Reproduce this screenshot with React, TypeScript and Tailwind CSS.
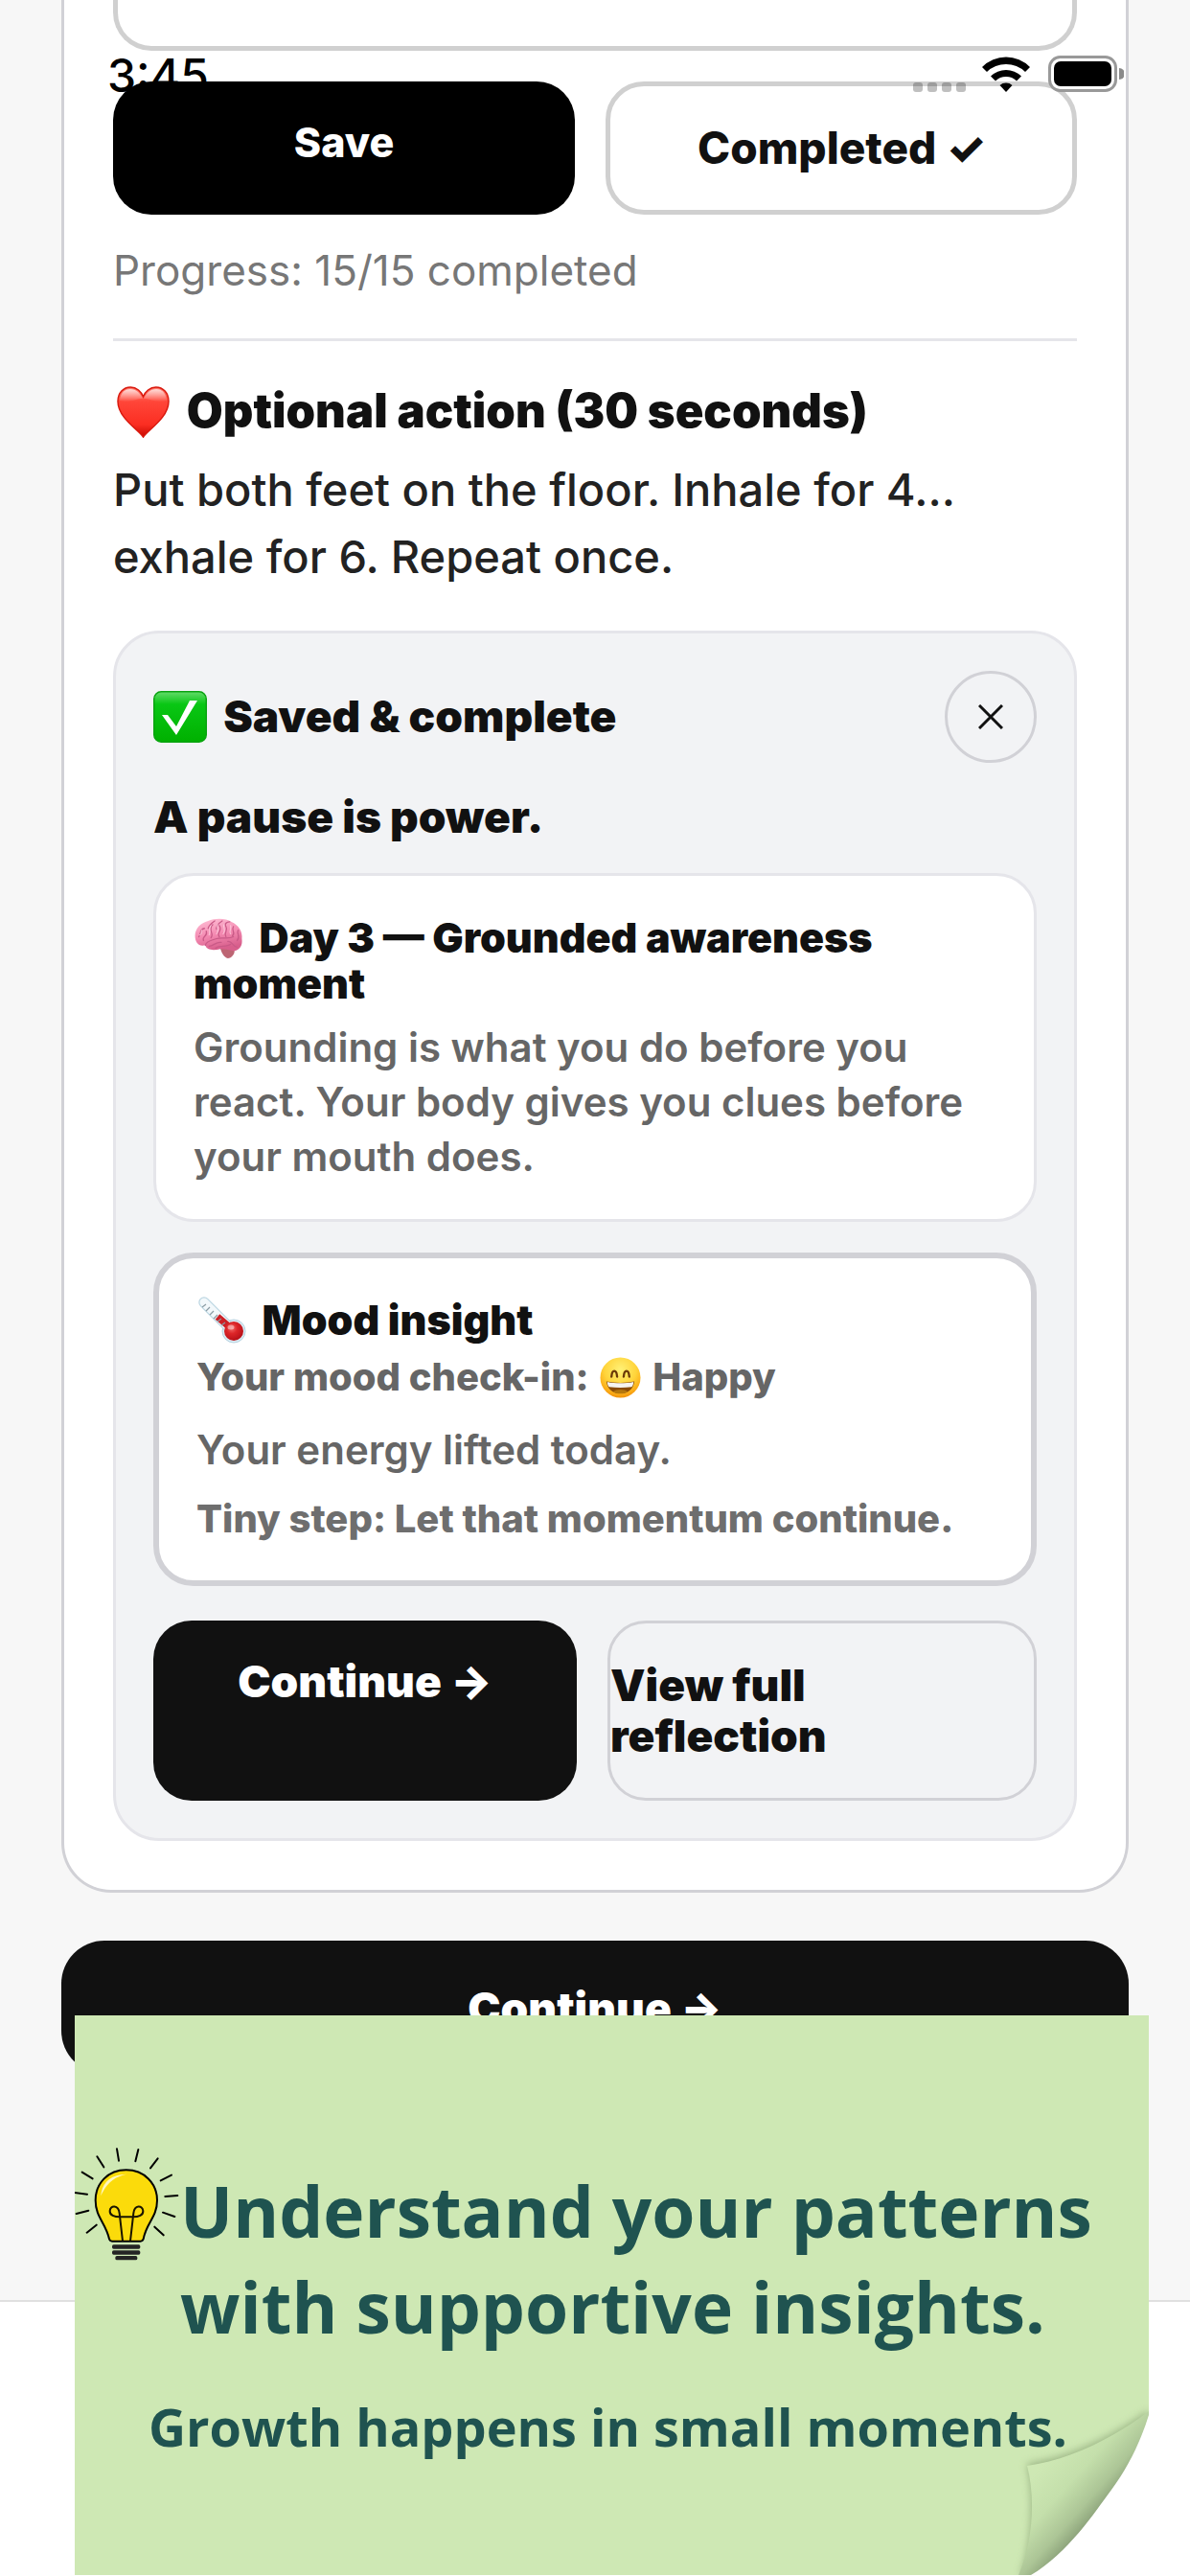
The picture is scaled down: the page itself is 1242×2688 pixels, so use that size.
import type { ReactNode } from "react";

// ---------- status bar ----------

const WifiIcon = () => (
  <svg viewBox="0 0 50 38" className="h-[38px] w-[50px]" aria-hidden="true">
    <path d="M0 12A35 35 0 0 1 50 12L45 17A29 29 0 0 0 5 17Z" />
    <path d="M9 21.5A23 23 0 0 1 41 21.5L36 26.5A16 16 0 0 0 14 26.5Z" />
    <path d="M18.5 31A10 10 0 0 1 31.5 31L25 38Z" />
  </svg>
);

const BatteryIcon = () => (
  <svg viewBox="0 0 79 38" className="h-[38px] w-[79px]" aria-hidden="true">
    <rect x="1.5" y="1.5" width="69" height="35" rx="11" fill="#fff" stroke="#999" strokeWidth="3" />
    <rect x="6" y="6" width="60" height="26" rx="7" />
    <path d="M74 13a6 6 0 0 1 0 12Z" fill="#8a8a8a" />
  </svg>
);

const StatusBar = () => (
  <div className="pointer-events-none absolute inset-x-0 top-0 z-10 flex items-start justify-between pt-[58px] pr-[69px] pl-[112px]">
    <span className="text-[48px] leading-[42px] font-medium text-black">3:45</span>
    <div className="flex items-start">
      <div className="flex gap-[5px] pt-7 pr-[17px]">
        {[0, 1, 2, 3].map((dot) => (
          <span key={dot} className="size-[10px] rounded-[3px] bg-black/25" />
        ))}
      </div>
      <div className="flex gap-[19px]">
        <WifiIcon />
        <BatteryIcon />
      </div>
    </div>
  </div>
);

// ---------- emoji ----------

const HeartEmoji = () => (
  <svg viewBox="0 0 56 55" className="mr-2 ml-1 inline h-[54px] w-[55px] align-[-11px]" aria-hidden="true">
    <defs>
      <linearGradient id="heart" x1="0" y1="0" x2="0" y2="1">
        <stop offset="0" stopColor="#ff7d70" />
        <stop offset="0.3" stopColor="#ff4538" />
        <stop offset="0.75" stopColor="#fb2e22" />
        <stop offset="1" stopColor="#c60800" />
      </linearGradient>
      <linearGradient id="heartShine" x1="0" y1="0" x2="0" y2="1">
        <stop offset="0" stopColor="#fff" stopOpacity="0.75" />
        <stop offset="1" stopColor="#fff" stopOpacity="0" />
      </linearGradient>
    </defs>
    <path
      d="M28 54C24 47 1 34 1 16C1 7 7 1 14.500 1C21 1 26 6 28 11C30 6 35 1 41.500 1C49 1 55 7 55 16C55 34 32 47 28 54Z"
      fill="url(#heart)"
      stroke="#d9180d"
      strokeWidth="1.500"
    />
    <path d="M3 15C4 6 9 3 14 3C21 3 25 8 27.500 13C20 13 13 19 3 15Z" fill="url(#heartShine)" />
    <path d="M53 15C52 6 47 3 42 3C35 3 31 8 28.500 13C36 13 43 19 53 15Z" fill="url(#heartShine)" />
  </svg>
);

const CheckEmoji = () => (
  <svg viewBox="0 0 56 54" className="mr-2 inline h-[54px] w-14 align-[-11px]" aria-hidden="true">
    <defs>
      <linearGradient id="check" x1="0" y1="0" x2="0" y2="1">
        <stop offset="0" stopColor="#63db69" />
        <stop offset="0.25" stopColor="#09c714" />
        <stop offset="1" stopColor="#00b000" />
      </linearGradient>
    </defs>
    <rect x="0.750" y="0.750" width="54.500" height="52.500" rx="7.500" fill="url(#check)" stroke="#0aa310" strokeWidth="1.500" />
    <path d="M9 25h6l9 12L38 10h8L24 46Z" fill="#fff" />
  </svg>
);

const BrainEmoji = () => (
  <svg viewBox="0 0 52 44" className="mr-2 inline h-[43px] w-[52px] align-[-7px]" aria-hidden="true">
    <defs>
      <linearGradient id="brain" x1="0" y1="0" x2="0.300" y2="1">
        <stop offset="0" stopColor="#ffc3d8" />
        <stop offset="0.550" stopColor="#f48bb2" />
        <stop offset="1" stopColor="#d85f8c" />
      </linearGradient>
    </defs>
    <path d="M28 32C31 33 40 30 43 34C44 38 40 43 36 43C32 42 29 37 28 32Z" fill="#bd6573" />
    <path
      d="M12 29C5 31 1 26 1 19C1 11 7 5 15 3C22 0 34 0 40 4C47 7 52 14 51 22C52 29 49 34 43 35C37 34 32 33 28 33C20 35 13 34 12 29Z"
      fill="url(#brain)"
    />
    <g fill="none" stroke="#c95a87" strokeWidth="1.300" strokeLinecap="round">
      <path d="M12 29C13 24 19 24 24 22C29 20 36 23 42 20" />
      <path d="M5 20C8 17 5 12 11 11M10 24C8 19 15 20 13 14M18 21C22 17 14 12 20 7M15 11C16 7 19 5 22 3" />
      <path d="M27 20C23 15 31 14 27 8M24 12C23 8 27 5 30 3M34 20C31 15 37 14 34 9C32 6 35 4 38 4" />
      <path d="M41 19C45 15 39 14 42 9M46 24C50 19 45 17 47 13M16 30C21 30 23 25 29 26M23 32C28 28 34 32 39 28M36 25C41 24 41 31 46 31" />
    </g>
    <g fill="none" stroke="#ffe0ea" strokeOpacity="0.800" strokeLinecap="round">
      <path d="M8 13C7 16 9 17 6 18M18 8C15 12 18 14 16 18M25 7C24 11 27 13 24 17M32 7C31 11 34 13 31 17M39 8C40 12 37 14 39 17" />
    </g>
  </svg>
);

const ThermometerEmoji = () => (
  <svg viewBox="0 0 50 50" className="mr-2 ml-0.5 inline h-[50px] w-[50px] align-[-9px]" aria-hidden="true">
    <defs>
      <radialGradient id="bulbRed" cx="0.400" cy="0.350" r="0.700">
        <stop offset="0" stopColor="#f26a68" />
        <stop offset="0.400" stopColor="#dd2629" />
        <stop offset="1" stopColor="#b30d16" />
      </radialGradient>
    </defs>
    <circle cx="37" cy="37" r="12" fill="#dcebf3" stroke="#b5d2e0" />
    <path d="M6 7L32 33" stroke="#bcd6e2" strokeWidth="11.500" strokeLinecap="round" />
    <path d="M6 7L32 33" stroke="#f2f8fb" strokeWidth="9" strokeLinecap="round" />
    <path d="M20 22L34 34" stroke="#cc1f25" strokeWidth="7" />
    <circle cx="37" cy="37" r="10" fill="url(#bulbRed)" />
    <path d="M4 12l4-3M8 16l4-4M12 20l4-4M16 24l4-4M20 27l4-3M24 31l4-3" stroke="#8b9ba3" strokeWidth="1.200" />
    <ellipse cx="34" cy="33" rx="3.500" ry="2.500" fill="#fff" opacity="0.450" />
  </svg>
);

const GrinEmoji = () => (
  <svg viewBox="0 0 44 44" className="mx-[3px] inline size-[43px] align-[-8px]" aria-hidden="true">
    <defs>
      <radialGradient id="grin" cx="0.500" cy="0.300" r="0.720">
        <stop offset="0" stopColor="#fff176" />
        <stop offset="0.550" stopColor="#ffd43a" />
        <stop offset="0.850" stopColor="#fbab17" />
        <stop offset="1" stopColor="#ee8a06" />
      </radialGradient>
    </defs>
    <circle cx="22" cy="22" r="21.500" fill="url(#grin)" />
    <path d="M12.500 21C13 13 18 13 18.500 21M25.500 21C26 13 31 13 31.500 21" fill="none" stroke="#6b3a08" strokeWidth="2.400" strokeLinecap="round" />
    <path d="M7 26C17 28 27 28 37 26C36 34 30 39 22 39C14 39 8 34 7 26Z" fill="#8a4b07" />
    <path d="M8 26.500C17 28.500 27 28.500 36 26.500C36 29 35 31 34 32C26 33 18 33 10 32C9 31 8 29 8 26.500Z" fill="#f6f4f0" />
    <path d="M14 37C18 34 26 34 30 37C25 40 19 40 14 37Z" fill="#b5770d" />
  </svg>
);

// ---------- building blocks ----------

const PrimaryButton = ({ children, className = "" }: { children: ReactNode; className?: string }) => (
  <button type="button" className={`flex items-start justify-center leading-[53px] text-white ${className}`}>
    {children}
  </button>
);

const OutlineButton = ({ children, className = "" }: { children: ReactNode; className?: string }) => (
  <button
    type="button"
    className={`flex flex-1 items-center rounded-[40px] py-[38px] leading-[53px] text-[#111] ${className}`}
  >
    {children}
  </button>
);

const SavedPanel = () => (
  <section className="mt-[42px] rounded-[48px] border-[3px] border-[#e5e5ea] bg-[#f2f3f5] p-[39px]">
    <div className="flex items-center justify-between">
      <h3 className="text-[46px] leading-[53px] font-black">
        <CheckEmoji /> Saved &amp; complete
      </h3>
      <button
        type="button"
        aria-label="Close"
        className="flex size-24 items-center justify-center rounded-full border-[3px] border-[#d1d1d6]"
      >
        <svg viewBox="0 0 26 26" className="size-[26px]" aria-hidden="true">
          <path d="M1 1L25 25M25 1L1 25" stroke="#111" strokeWidth="3" />
        </svg>
      </button>
    </div>

    <p className="mt-[29px] text-[46px] leading-[54px] font-black">A pause is power.</p>

    {/* lesson recap */}
    <article className="mt-8 rounded-[42px] border-[3px] border-[#e5e5ea] bg-white px-[39px] pt-10 pb-[37px]">
      <h4 className="text-[43px] leading-[48px] font-black">
        <BrainEmoji /> Day 3 — Grounded awareness moment
      </h4>
      <p className="mt-3.5 text-[42px] leading-[57px] font-semibold text-[#666]">
        Grounding is what you do before you react. Your body gives you clues before your mouth does.
      </p>
    </article>

    {/* mood check-in */}
    <article className="mt-8 rounded-[42px] border-[6px] border-[#d1d1d6] bg-white px-[39px] pt-[39px] pb-[41px]">
      <h4 className="text-[43px] leading-[48px] font-black">
        <ThermometerEmoji /> Mood insight
      </h4>
      <p className="mt-[11px] text-[40px] leading-[47px] font-extrabold text-[#666]">
        Your mood check-in: <GrinEmoji /> Happy
      </p>
      <p className="mt-6 text-[42px] leading-[57px] font-semibold text-[#666]">Your energy lifted today.</p>
      <p className="mt-5 text-[40px] leading-[47px] font-extrabold text-[#6e6e6e]">
        Tiny step: Let that momentum continue.
      </p>
    </article>

    <div className="mt-9 flex gap-8">
      <PrimaryButton className="flex-1 rounded-[40px] bg-[#111] pt-[37px] text-[46px] font-black">Continue →</PrimaryButton>
      <OutlineButton className="border-[3px] border-[#d1d1d6] text-left text-[46px] font-black">
        View full
        <br />
        reflection
      </OutlineButton>
    </div>
  </section>
);

// ---------- sticky note ----------

const LightBulb = () => (
  <svg viewBox="52 80 330 369" className="h-[123px] w-[110px] shrink-0" aria-hidden="true">
    <g stroke="#000" strokeWidth="6" strokeLinecap="round">
      <path d="M184 96L190 133M251 98L242 135M122 120L143 153M312 126L289 156M75 169L108 189M355 178L321 195" />
      <path d="M52 233L91 238M374 242L335 245M57 299L95 289M328 295L365 308M90 358L120 334M302 340L330 366" />
    </g>
    <path
      d="M213 162C157 162 117 203 117 257C117 310 149 327 160 378Q162 385 169 385H258Q265 385 267 378C276 327 310 310 310 257C310 203 269 162 213 162Z"
      fill="#fbdb0b"
      stroke="#000"
      strokeWidth="6"
    />
    <path d="M134 243C137 200 165 176 214 175C178 183 152 201 134 243Z" fill="#fff6bd" />
    <path
      d="M202 384L192 297C189 270 163 271 162 290C161 304 176 309 194 309H234C252 309 267 304 266 290C264 271 239 270 236 297L226 384"
      fill="none"
      stroke="#1a1400"
      strokeWidth="6"
    />
    <g fill="#242424">
      <rect x="169" y="396" width="88" height="13" rx="5" />
      <rect x="169" y="414" width="88" height="13" rx="5" />
      <rect x="179" y="431" width="69" height="13" rx="5" />
    </g>
  </svg>
);

const PageCurl = () => (
  <svg viewBox="0 0 160 180" className="absolute right-0 bottom-0 h-[180px] w-40" aria-hidden="true">
    <defs>
      <linearGradient id="fold" gradientUnits="userSpaceOnUse" x1="52" y1="62" x2="108" y2="112">
        <stop offset="0" stopColor="#cee8b4" />
        <stop offset="0.450" stopColor="#c4dfab" />
        <stop offset="0.800" stopColor="#acc596" />
        <stop offset="1" stopColor="#8fa67d" />
      </linearGradient>
      <filter id="foldShadow" x="-30%" y="-30%" width="160%" height="160%">
        <feGaussianBlur stdDeviation="4" />
      </filter>
    </defs>
    <path d="M33 64C76 58 122 36 160 8L160 180H26C38 148 41 98 33 64Z" fill="#7d9669" opacity="0.650" filter="url(#foldShadow)" />
    <path d="M33 66C76 60 122 38 160 9V180H24C39 146 42 100 33 66Z" fill="url(#fold)" />
    <path d="M160 13C151 42 138 68 121 91S75 158 37 180H160Z" fill="#fff" />
  </svg>
);

const StickyNote = () => (
  <aside className="absolute right-[43px] bottom-px left-[78px] z-20 h-[584px] overflow-hidden bg-[#cee8b4] pt-[134px] font-['Open_Sans',sans-serif] font-bold text-[#1f5350]">
    <div className="flex items-start">
      <LightBulb />
      <h2 className="mt-5 text-[73px] leading-[100px]">
        Understand your patterns with supportive insights.
      </h2>
    </div>
    <PageCurl />
    <p className="relative mt-10 pr-2 text-center text-[54px] leading-[70px]">Growth happens in small moments.</p>
  </aside>
);

export default function App() {
  return (
    <div className="relative flex min-h-screen flex-col overflow-hidden bg-white font-[Inter,sans-serif] text-[#111]">
      <StatusBar />

      <main className="border-b-2 border-[#e0e0e0] bg-[#f7f7f7] px-16 pb-[236px]">
        <div className="rounded-b-[52px] border-x-[3px] border-b-[3px] border-[#d1d1d6] bg-white px-[51px] pb-[51px]">
          <textarea
            aria-label="Reflection"
            className="block h-[53px] w-full resize-none rounded-b-[40px] border-x-[5px] border-b-[5px] border-[#d0d0d0]"
          />

          <div className="mt-8 flex gap-8">
            <PrimaryButton className="relative z-20 flex-1 rounded-[40px] bg-black pt-[37px] text-[43px] font-extrabold">
              Save
            </PrimaryButton>
            <OutlineButton className="justify-center border-[5px] border-[#d0d0d0] text-[46px] font-extrabold">
              Completed ✓
            </OutlineButton>
          </div>

          <p className="mt-[33px] text-[44px] leading-[50px] text-[#777]">Progress: 15/15 completed</p>
          <hr className="mt-[46px] border-t-[3px] border-[#e5e5ea]" />

          <h2 className="mt-11 text-[49px] leading-[58px] font-black">
            <HeartEmoji /> Optional action (30 seconds)
          </h2>
          <p className="mt-[18px] text-[47px] leading-[70px] font-medium text-[#222]">
            Put both feet on the floor. Inhale for 4... exhale for 6. Repeat once.
          </p>

          <SavedPanel />
        </div>

        <PrimaryButton className="mt-[50px] w-full rounded-[45px] bg-[#111] pt-11 pb-[42px] text-[46px] font-black">
          Continue →
        </PrimaryButton>
      </main>

      <StickyNote />
    </div>
  );
}
